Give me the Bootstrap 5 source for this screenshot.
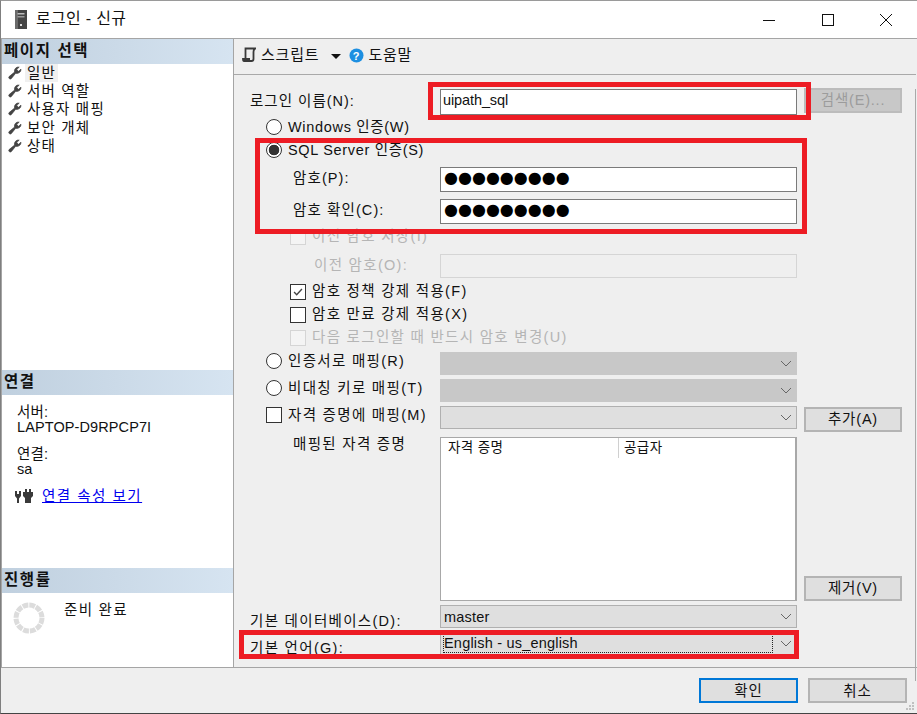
<!DOCTYPE html>
<html lang="ko">
<head>
<meta charset="utf-8">
<title>로그인 - 신규</title>
<link href="https://cdn.jsdelivr.net/npm/bootstrap@5.3.0/dist/css/bootstrap.min.css" rel="stylesheet">
<style>
html,body{height:100%;margin:0;overflow:hidden}
body{font-family:"Liberation Sans","Noto Sans CJK KR",sans-serif;font-size:14.5px;line-height:18px;color:#111;background:#fff}
.win{width:917px;height:714px;border-left:1px solid #7f7f7f;border-top:1px solid #9a9a9a;border-bottom:1px solid #444;background:#efefef;position:relative;overflow:hidden}
.titlebar{height:38px;background:#fff;border-bottom:1px solid #a5a5a5;padding-left:13px;font-size:16px;gap:8px;letter-spacing:.3px}
.titletext{padding-bottom:2px}
.winbtns{margin-left:auto;width:155px;padding-right:24px}
.mainbody{height:629px;border-bottom:1px solid #a5a5a5}
.side{width:233px;background:#fff;border-left:1px solid #a5a5a5;border-right:1px solid #a5a5a5}
.sidehead{height:25px;padding:0 0 1px 2px;background:linear-gradient(90deg,#c0d0df,#d6e4f1);font-weight:700;font-size:15.5px;letter-spacing:1.6px}
.pagelist{height:306px;padding-top:0}
.pageitem{height:18.2px;padding-left:6px;gap:3px;border:0;background:none;color:#111;letter-spacing:1.2px;white-space:nowrap}
.pagename{padding:0 2px;height:18px}
.pagename-on{background:#f0f0f0}
.connbox{height:173px;padding:10px 0 0 15px}
.connbox p{margin:0;letter-spacing:.1px;line-height:15px}
.connsp{margin-top:12px !important}
.connrow{margin-top:10px}
.conicon{margin-left:-3px}
.connlink{color:#0000ee;letter-spacing:1.5px;margin-left:8px}
.progbox{padding:8px 0 0 10px;gap:18px;letter-spacing:1.3px}
.content{width:682px}
.toolstrip{height:36px;border-bottom:1px solid #a9a9a9;padding:0 0 3px 8px;gap:4px;letter-spacing:.8px;font-size:15px}
.arrowdown{width:0;height:0;border-left:5px solid transparent;border-right:5px solid transparent;border-top:5px solid #111;margin:2px 4px 0 8px}
.formpane{height:592px;border-right:1px solid #a9a9a9;padding-left:16px;letter-spacing:1.3px}
.frow{display:flex;align-items:center}
.lab{width:190px;white-space:nowrap}
.lab-name{letter-spacing:1px;padding-bottom:2px}
.lab-in{padding-left:43px}
.lab-pw{letter-spacing:1.1px;padding-bottom:4px}
.lab-old{padding-left:64px;padding-bottom:2px}
.lab-opt{padding-bottom:5px}
.maplab{line-height:14px}
.opt{padding-left:16px;gap:6px;white-space:nowrap}
.opt-latin{letter-spacing:.68px}
.opt-in{padding-left:40px;gap:6px;white-space:nowrap}
.opt-in span{padding-bottom:2px}
.r1{height:26px;margin-top:14px}.r2{height:22px;margin-top:1px}.r3{height:22px;margin-top:1px}.r4{height:25px;margin-top:6px}.r5{height:25px;margin-top:7px}
.r6{height:16px;margin-top:5px}.r7{height:24px;margin-top:9px}.r8,.r9,.r10{height:16px;margin-top:7px}.r8{margin-top:6px}
.r11{height:23px;margin-top:6px}.r12{height:23px;margin-top:4px}.r13{height:23px;margin-top:4px}
.r14{height:164px;margin-top:8px;align-items:stretch}.r15{height:23px;margin-top:4px}.r16{height:23px;margin-top:4px}
.form-control.tbox{width:357px;height:100%;padding:1px 2px;border:1px solid #7a7a7a;border-radius:0;font:inherit;line-height:18px;letter-spacing:-.1px;color:#111;background:#fff;white-space:nowrap;overflow:hidden}
.form-control.tbox.dots{font-family:"DejaVu Sans",sans-serif;font-size:16px;letter-spacing:0;line-height:19px;padding:0 3px;color:#000}
.form-control.tbox-off{background:#efefef;border-color:#d5d5d5}
.form-select.cbox{width:357px;height:100%;padding:2px 3px 0;border:1px solid #b0b0b0;border-radius:0;font:inherit;line-height:18px;color:#111;letter-spacing:.2px;background-color:#dfdfdf;background-position:right 3px center;background-size:14px 10px;background-image:url("data:image/svg+xml,%3Csvg xmlns='http://www.w3.org/2000/svg' viewBox='0 0 14 10'%3E%3Cpath fill='none' stroke='%23666' d='M2 2l5 5 5-5'/%3E%3C/svg%3E")}
.form-select.cbox-off{background-color:#c8c8c8;border-color:#c8c8c8}
.focused{border:1px dotted #222;height:19px;margin-top:-1px;margin-right:20px;margin-left:-1px;padding-left:0;line-height:16px}
.form-check-input.rad,.form-check-input.chk{width:16px;height:16px;margin:0;flex:none;background-color:#fff;border:1px solid #333;box-shadow:none;float:none}
.form-check-input.rad:checked{background-color:#fff;border-color:#333;background-image:radial-gradient(circle,#333 0 5px,transparent 5.6px)}
.form-check-input.chk{border-radius:0}
.form-check-input.chk:checked{background-color:#fff;border-color:#333;background-size:14px;background-image:url("data:image/svg+xml,%3Csvg xmlns='http://www.w3.org/2000/svg' viewBox='0 0 16 16'%3E%3Cpath fill='none' stroke='%23444' stroke-width='1.6' d='M3.5 8l3 3 6-6.5'/%3E%3C/svg%3E")}
.form-check-input.chk-off{opacity:1;background-color:#f4f4f4;border-color:#d5d5d5}
.offtext{color:#b5b5b5}
.wbtn.btn{width:98px;height:25px;margin-left:7px;padding:0 0 1px;border:2px solid #b4b4b4;border-radius:0;background:#dfdfdf;color:#111;font:inherit;line-height:18px;letter-spacing:.8px}
.wbtn.btn.wbtn-off{background:#c8c8c8;border-color:#bcbcbc;color:#9c9c9c;opacity:1;align-self:flex-start;margin-top:-1px}
.wbtn.btn.wbtn-add{align-self:flex-start;margin-top:1px}
.listbox{width:357px;background:#fff;border:1px solid #a8a8a8;border-right-width:2px}
.listhead{height:20px;font-size:13.5px;letter-spacing:.4px;line-height:19px}
.listcol1{width:178px;padding-left:7px;border-right:1px solid #d0d0d0}
.listcol2{padding-left:5px}
.footbar{height:44px;padding:10px 10px 0 0;justify-content:flex-end;gap:10px}
.footbtn.btn{width:99px;height:25px;padding:0;border:2px solid #b4b4b4;border-radius:0;background:#dfdfdf;color:#111;font:inherit;line-height:18px;letter-spacing:.8px}
.footbtn.btn.btn-def{border-color:#0078d7}
.redbox{position:absolute;border:5px solid #ed1c24;pointer-events:none}
.rb1{left:427px;top:81px;width:383px;height:38px}
.rb2{left:254px;top:137px;width:552px;height:96px}
.rb3{left:238px;top:629px;width:560px;height:29px}
.grip{position:absolute;right:2px;bottom:2px}
</style>
</head>
<body>
<div class="win">
  <div class="titlebar d-flex align-items-center">
    <svg width="14" height="20" viewBox="0 0 14 20"><rect x="1" y="0" width="12" height="19" fill="#444"/><rect x="1" y="0" width="3" height="19" fill="#6a6a6a"/><rect x="3.500" y="3" width="7" height="1.500" fill="#bbb"/><rect x="3.500" y="6" width="7" height="1.500" fill="#999"/><rect x="6" y="14" width="2" height="2" fill="#ddd"/></svg>
    <span class="titletext">로그인 - 신규</span>
    <div class="winbtns d-flex align-items-center justify-content-between">
      <svg width="14" height="14" viewBox="0 0 14 14"><path d="M1 7.500h12" stroke="#111" fill="none"/></svg>
      <svg width="14" height="14" viewBox="0 0 14 14"><rect x="1.500" y="1.500" width="11" height="11" stroke="#111" fill="none"/></svg>
      <svg width="14" height="14" viewBox="0 0 14 14"><path d="M1 1l12 12M13 1L1 13" stroke="#111" fill="none"/></svg>
    </div>
  </div>
  <div class="mainbody d-flex">
    <div class="side flex-shrink-0">
      <div class="sidehead d-flex align-items-center">페이지 선택</div>
      <div class="pagelist">
        <div class="pageitem d-flex align-items-center"><svg width="14" height="14" viewBox="0 0 14 14"><path d="M13 3.200a4 4 0 0 1-5.300 4L3.200 12.700a1.500 1.500 0 0 1-2.100-2.100l5.500-4.500a4 4 0 0 1 4.600-5L8.700 3.500l1.800 1.800z" fill="#444" stroke="#444" stroke-width=".7"/></svg><span class="pagename pagename-on">일반</span></div>
        <div class="pageitem d-flex align-items-center"><svg width="14" height="14" viewBox="0 0 14 14"><path d="M13 3.200a4 4 0 0 1-5.300 4L3.200 12.700a1.500 1.500 0 0 1-2.100-2.100l5.500-4.500a4 4 0 0 1 4.600-5L8.700 3.500l1.800 1.800z" fill="#444" stroke="#444" stroke-width=".7"/></svg><span class="pagename">서버 역할</span></div>
        <div class="pageitem d-flex align-items-center"><svg width="14" height="14" viewBox="0 0 14 14"><path d="M13 3.200a4 4 0 0 1-5.300 4L3.200 12.700a1.500 1.500 0 0 1-2.100-2.100l5.500-4.500a4 4 0 0 1 4.600-5L8.700 3.500l1.800 1.800z" fill="#444" stroke="#444" stroke-width=".7"/></svg><span class="pagename">사용자 매핑</span></div>
        <div class="pageitem d-flex align-items-center"><svg width="14" height="14" viewBox="0 0 14 14"><path d="M13 3.200a4 4 0 0 1-5.300 4L3.200 12.700a1.500 1.500 0 0 1-2.100-2.100l5.500-4.500a4 4 0 0 1 4.600-5L8.700 3.500l1.800 1.800z" fill="#444" stroke="#444" stroke-width=".7"/></svg><span class="pagename">보안 개체</span></div>
        <div class="pageitem d-flex align-items-center"><svg width="14" height="14" viewBox="0 0 14 14"><path d="M13 3.200a4 4 0 0 1-5.300 4L3.200 12.700a1.500 1.500 0 0 1-2.100-2.100l5.500-4.500a4 4 0 0 1 4.600-5L8.700 3.500l1.800 1.800z" fill="#444" stroke="#444" stroke-width=".7"/></svg><span class="pagename">상태</span></div>
      </div>
      <div class="sidehead d-flex align-items-center">연결</div>
      <div class="connbox">
        <p>서버:</p>
        <p>LAPTOP-D9RPCP7I</p>
        <p class="connsp">연결:</p>
        <p>sa</p>
        <div class="d-flex align-items-center connrow">
          <svg class="conicon" width="20" height="16" viewBox="0 0 20 16"><g fill="#3a3a3a"><path d="M1 3h2v3h2V3h2v5L5 10.500V15H3v-4.500L1 8z"/><path d="M11 1h2v3h2V1h2v3h2v4l-2 2v5h-6v-5l-2-2V4h2z"/></g></svg>
          <a href="#" class="connlink">연결 속성 보기</a>
        </div>
      </div>
      <div class="sidehead d-flex align-items-center">진행률</div>
      <div class="progbox d-flex">
        <svg width="34" height="34" viewBox="0 0 34 34"><circle cx="17" cy="17" r="13" fill="none" stroke="#dcdcdc" stroke-width="5" stroke-dasharray="5.800 1"/></svg>
        <span>준비 완료</span>
      </div>
    </div>
    <div class="content">
      <div class="toolstrip d-flex align-items-center">
        <svg width="15" height="16" viewBox="0 0 15 16"><path d="M3.500 12V1.500h10.500M12.500 2c-1 1-1 1.500-1 3v7c0 1-1 2-2 2H2c-1 0-1-1-1-2h7" stroke="#3a3a3a" stroke-width="1.800" fill="none"/></svg>
        <span>스크립트</span>
        <span class="arrowdown"></span>
        <svg width="15" height="15" viewBox="0 0 15 15"><circle cx="7.500" cy="7.500" r="7" fill="#1d8fe1"/><text x="7.500" y="11.500" text-anchor="middle" font-family="Liberation Sans" font-weight="700" font-size="11" fill="#fff">?</text></svg>
        <span>도움말</span>
      </div>
      <div class="formpane">
        <div class="frow r1"><label class="lab lab-name">로그인 이름(N):</label><div class="form-control tbox">uipath_sql</div><button class="btn wbtn wbtn-off" disabled>검색(E)...</button></div>
        <div class="frow r2 opt opt-latin"><input class="form-check-input rad" type="radio" name="au"><span>Windows 인증(W)</span></div>
        <div class="frow r3 opt opt-latin"><input class="form-check-input rad" type="radio" name="au" checked><span>SQL Server 인증(S)</span></div>
        <div class="frow r4"><label class="lab lab-in lab-pw">암호(P):</label><div class="form-control tbox dots">●●●●●●●●●</div></div>
        <div class="frow r5"><label class="lab lab-in lab-pw">암호 확인(C):</label><div class="form-control tbox dots">●●●●●●●●●</div></div>
        <div class="frow r6 opt-in offtext"><input class="form-check-input chk chk-off" type="checkbox" disabled><span>이전 암호 저장(I)</span></div>
        <div class="frow r7"><label class="lab offtext lab-old">이전 암호(O):</label><div class="form-control tbox tbox-off"></div></div>
        <div class="frow r8 opt-in"><input class="form-check-input chk" type="checkbox" checked><span>암호 정책 강제 적용(F)</span></div>
        <div class="frow r9 opt-in"><input class="form-check-input chk" type="checkbox"><span>암호 만료 강제 적용(X)</span></div>
        <div class="frow r10 opt-in offtext"><input class="form-check-input chk chk-off" type="checkbox" disabled><span>다음 로그인할 때 반드시 암호 변경(U)</span></div>
        <div class="frow r11"><div class="lab lab-opt d-flex align-items-center opt"><input class="form-check-input rad" type="radio" name="au"><span>인증서로 매핑(R)</span></div><div class="form-select cbox cbox-off"></div></div>
        <div class="frow r12"><div class="lab lab-opt d-flex align-items-center opt"><input class="form-check-input rad" type="radio" name="au"><span>비대칭 키로 매핑(T)</span></div><div class="form-select cbox cbox-off"></div></div>
        <div class="frow r13"><div class="lab lab-opt d-flex align-items-center opt"><input class="form-check-input chk" type="checkbox"><span>자격 증명에 매핑(M)</span></div><div class="form-select cbox"></div><button class="btn wbtn wbtn-add">추가(A)</button></div>
        <div class="frow r14"><div class="lab lab-in maplab">매핑된 자격 증명</div><div class="listbox"><div class="listhead d-flex"><div class="listcol1">자격 증명</div><div class="listcol2">공급자</div></div></div><button class="btn wbtn align-self-end">제거(V)</button></div>
        <div class="frow r15"><label class="lab pt-2">기본 데이터베이스(D):</label><div class="form-select cbox">master</div></div>
        <div class="frow r16"><label class="lab pt-2">기본 언어(G):</label><div class="form-select cbox"><div class="focused">English - us_english</div></div></div>
      </div>
    </div>
  </div>
  <div class="footbar d-flex">
    <button class="btn footbtn btn-def">확인</button>
    <button class="btn footbtn">취소</button>
  </div>
  <div class="redbox rb1"></div>
  <div class="redbox rb2"></div>
  <div class="redbox rb3"></div>
  <svg class="grip" width="9" height="9" viewBox="0 0 9 9"><g fill="#c0c0c0"><rect x="6" y="0" width="2" height="2"/><rect x="3" y="3" width="2" height="2"/><rect x="6" y="3" width="2" height="2"/><rect x="0" y="6" width="2" height="2"/><rect x="3" y="6" width="2" height="2"/><rect x="6" y="6" width="2" height="2"/></g></svg>
</div>
<script src="https://cdn.jsdelivr.net/npm/bootstrap@5.3.0/dist/js/bootstrap.bundle.min.js"></script>
</body>
</html>
